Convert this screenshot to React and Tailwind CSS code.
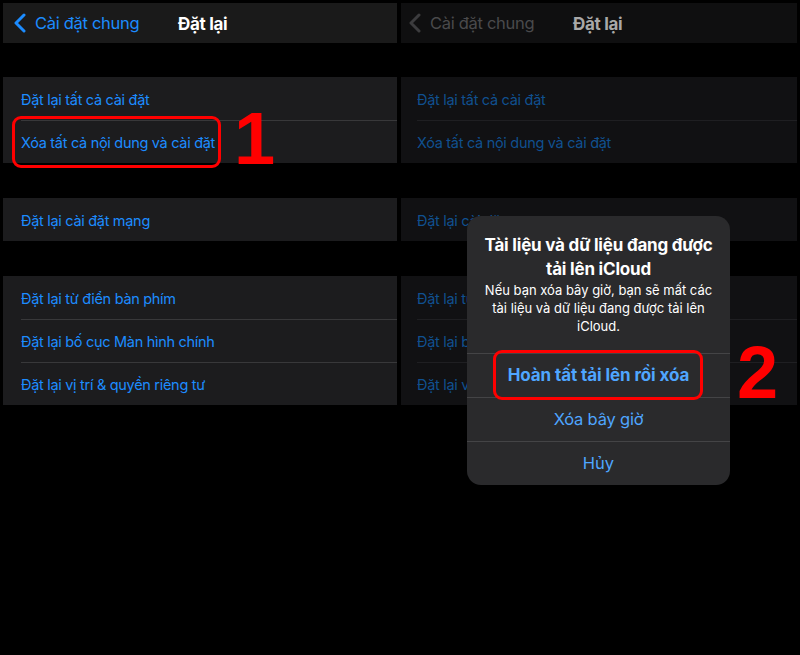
import React from 'react';

const font = { fontFamily: 'Inter, "Noto Sans", sans-serif' };

const Chevron = ({ color }) => (
    <svg width="12" height="20" viewBox="0 0 12 20" fill="none">
        <path d="M10 2 L2 10 L10 18" stroke={color} strokeWidth="3" strokeLinecap="round" strokeLinejoin="round" />
    </svg>
);

const Group = ({ rows, dim }) => (
    <div className={dim ? 'bg-[#111113]' : 'bg-[#1c1c1e]'}>
        {rows.map((r, i) => (
            <div key={r} className={dim ? 'pl-[16px]' : 'pl-[18px]'}>
                {i > 0 && <div className={dim ? 'h-px bg-[#1f1f22]' : 'h-px bg-[#38383a]'} />}
                <div className={`h-[43px] flex items-center pt-[2px] text-[14.5px] tracking-[-0.3px] ${dim ? 'text-[#10508f]' : 'text-[#1c8cff]'} ${i > 0 ? '-mt-px' : ''}`}>
                    {r}
                </div>
            </div>
        ))}
    </div>
);

const Panel = ({ dim }) => (
    <div className="flex flex-col">
        <div className={`h-10 flex items-center relative ${dim ? 'bg-[#0f0f10]' : 'bg-[#1a1a1a]'}`}>
            <div className={`flex items-center gap-[9px] ${dim ? 'pl-[8px]' : 'pl-[11px]'}`}>
                <Chevron color={dim ? '#3c3c3e' : '#1c8cff'} />
                <span className={`text-[16.5px] tracking-[-0.3px] ${dim ? 'text-[#4a4a4c]' : 'text-[#1c8cff]'}`}>Cài đặt chung</span>
            </div>
            <span className={`absolute top-[9px] text-[17px] font-bold tracking-[-0.3px] ${dim ? 'left-[172px] text-[#a8a8a8]' : 'left-[175px] text-white'}`}>Đặt lại</span>
        </div>
        <div className="mt-[34px]">
            <Group dim={dim} rows={['Đặt lại tất cả cài đặt', 'Xóa tất cả nội dung và cài đặt']} />
        </div>
        <div className="mt-[35px]">
            <Group dim={dim} rows={['Đặt lại cài đặt mạng']} />
        </div>
        <div className="mt-[35px]">
            <Group dim={dim} rows={['Đặt lại từ điển bàn phím', 'Đặt lại bố cục Màn hình chính', 'Đặt lại vị trí & quyền riêng tư']} />
        </div>
    </div>
);

const Alert = () => (
    <div className="absolute left-[66px] top-[213px] w-[263px] rounded-[14px] bg-[#2a2a2c] overflow-hidden">
        <div className="px-2 pt-[17px] pb-[18px] text-center whitespace-nowrap">
            <div className="text-[17px] font-bold text-white leading-[24px] tracking-[-0.2px]">
                Tài liệu và dữ liệu đang được<br />tải lên iCloud
            </div>
            <div className="text-[13px] text-white leading-[18px]">
                Nếu bạn xóa bây giờ, bạn sẽ mất các<br />tài liệu và dữ liệu đang được tải lên<br />iCloud.
            </div>
        </div>
        <div className="h-px bg-[#444446]" />
        <div className="h-[43px] flex items-center justify-center text-[17px] font-bold tracking-[-0.1px] text-[#4fa6ff]">Hoàn tất tải lên rồi xóa</div>
        <div className="h-px bg-[#444446]" />
        <div className="h-[43px] flex items-center justify-center text-[16.5px] tracking-[-0.2px] text-[#4fa6ff]">Xóa bây giờ</div>
        <div className="h-px bg-[#444446]" />
        <div className="h-[43px] flex items-center justify-center text-[16.5px] text-[#4fa6ff]">Hủy</div>
    </div>
);

export default function App() {
    return (
        <div className="w-[800px] h-[655px] bg-black relative overflow-hidden" style={font}>
            <div className="flex pt-[3px] pl-[3px] gap-[4px]">
                <div className="w-[394px]">
                    <Panel />
                </div>
                <div className="w-[396px] relative">
                    <Panel dim />
                    <Alert />
                </div>
            </div>

            {/* annotations */}
            <div className="absolute left-[12px] top-[116px] w-[209px] h-[52px] rounded-[9px] border-[3px] border-[#ff0000]" />
            <div className="absolute left-[234px] top-[102px] text-[74px] font-bold text-[#ff0000] leading-none" style={{ fontFamily: '"Liberation Sans", Arial, sans-serif' }}>1</div>
            <div className="absolute left-[493px] top-[350px] w-[210px] h-[50px] rounded-[9px] border-[3px] border-[#ff0000]" />
            <div className="absolute left-[737px] top-[336px] text-[74px] font-bold text-[#ff0000] leading-none" style={{ fontFamily: '"Liberation Sans", Arial, sans-serif' }}>2</div>
        </div>
    );
}
